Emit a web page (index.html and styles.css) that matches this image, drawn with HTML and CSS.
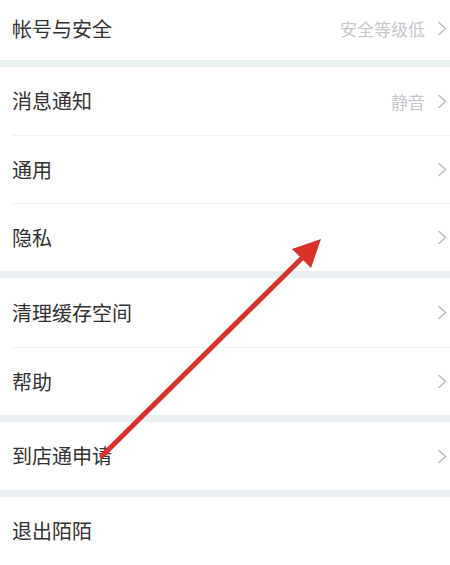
FILE: index.html
```html
<!DOCTYPE html>
<html lang="zh-CN">
<head>
  <meta charset="UTF-8">
  <meta name="viewport" content="width=device-width, initial-scale=1.0">
  <title>设置</title>
  <link rel="stylesheet" href="styles.css">
</head>
<body>
  <div class="settings">
    <div class="group">
      <div class="row row-top">
        <span class="label">帐号与安全</span>
        <span class="value">安全等级低</span>
        <svg class="chevron" width="10" height="15" viewBox="0 0 10 15"><polyline points="1.5,1 8.5,7.5 1.5,14"/></svg>
      </div>
    </div>

    <div class="group">
      <div class="row">
        <span class="label">消息通知</span>
        <span class="value">静音</span>
        <svg class="chevron" width="10" height="15" viewBox="0 0 10 15"><polyline points="1.5,1 8.5,7.5 1.5,14"/></svg>
      </div>
      <div class="row">
        <span class="label">通用</span>
        <svg class="chevron" width="10" height="15" viewBox="0 0 10 15"><polyline points="1.5,1 8.5,7.5 1.5,14"/></svg>
      </div>
      <div class="row">
        <span class="label">隐私</span>
        <svg class="chevron" width="10" height="15" viewBox="0 0 10 15"><polyline points="1.5,1 8.5,7.5 1.5,14"/></svg>
      </div>
    </div>

    <div class="group">
      <div class="row row-tall">
        <span class="label">清理缓存空间</span>
        <svg class="chevron" width="10" height="15" viewBox="0 0 10 15"><polyline points="1.5,1 8.5,7.5 1.5,14"/></svg>
      </div>
      <div class="row">
        <span class="label">帮助</span>
        <svg class="chevron" width="10" height="15" viewBox="0 0 10 15"><polyline points="1.5,1 8.5,7.5 1.5,14"/></svg>
      </div>
    </div>

    <div class="group">
      <div class="row">
        <span class="label">到店通申请</span>
        <svg class="chevron" width="10" height="15" viewBox="0 0 10 15"><polyline points="1.5,1 8.5,7.5 1.5,14"/></svg>
      </div>
    </div>

    <div class="group">
      <div class="row">
        <span class="label">退出陌陌</span>
      </div>
    </div>

    <!-- red annotation arrow drawn over the list -->
    <svg class="arrow" width="450" height="565" viewBox="0 0 450 565">
      <line x1="102" y1="456" x2="302" y2="258" stroke="#d8322b" stroke-width="5" stroke-linecap="round"/>
      <polygon points="321,239 311,268 292,249" fill="#d8322b"/>
    </svg>
  </div>
</body>
</html>
```

FILE: styles.css
```css
body {
  margin: 0;
  font-family: "Noto Sans CJK SC", "Noto Sans", sans-serif;
  background-color: #eaf0f1;
  color: #333333;
}
.settings {
  position: relative;
  width: 450px;
  height: 565px;
  overflow: hidden;
  display: flex;
  flex-direction: column;
  gap: 7px;
}
.group {
  background: #ffffff;
}
.row {
  display: flex;
  align-items: center;
  height: 68px;
  margin-left: 12px;
  padding-right: 3px;
  border-top: 1px solid #f1f2f2;
  box-sizing: border-box;
}
.row:first-child {
  border-top: none;
}
.row-top {
  height: 60px;
  padding-bottom: 3px;
}
.row-tall {
  height: 69px;
}
.label {
  flex: 1;
  font-size: 20px;
  line-height: 1;
  color: #333333;
}
.value {
  font-size: 17px;
  color: #c6c7cd;
  margin-right: 12px;
}
.chevron {
  flex: none;
}
.chevron polyline {
  fill: none;
  stroke: #b9bcc0;
  stroke-width: 1.5;
}
.arrow {
  position: absolute;
  top: 0;
  left: 0;
  pointer-events: none;
}
```
